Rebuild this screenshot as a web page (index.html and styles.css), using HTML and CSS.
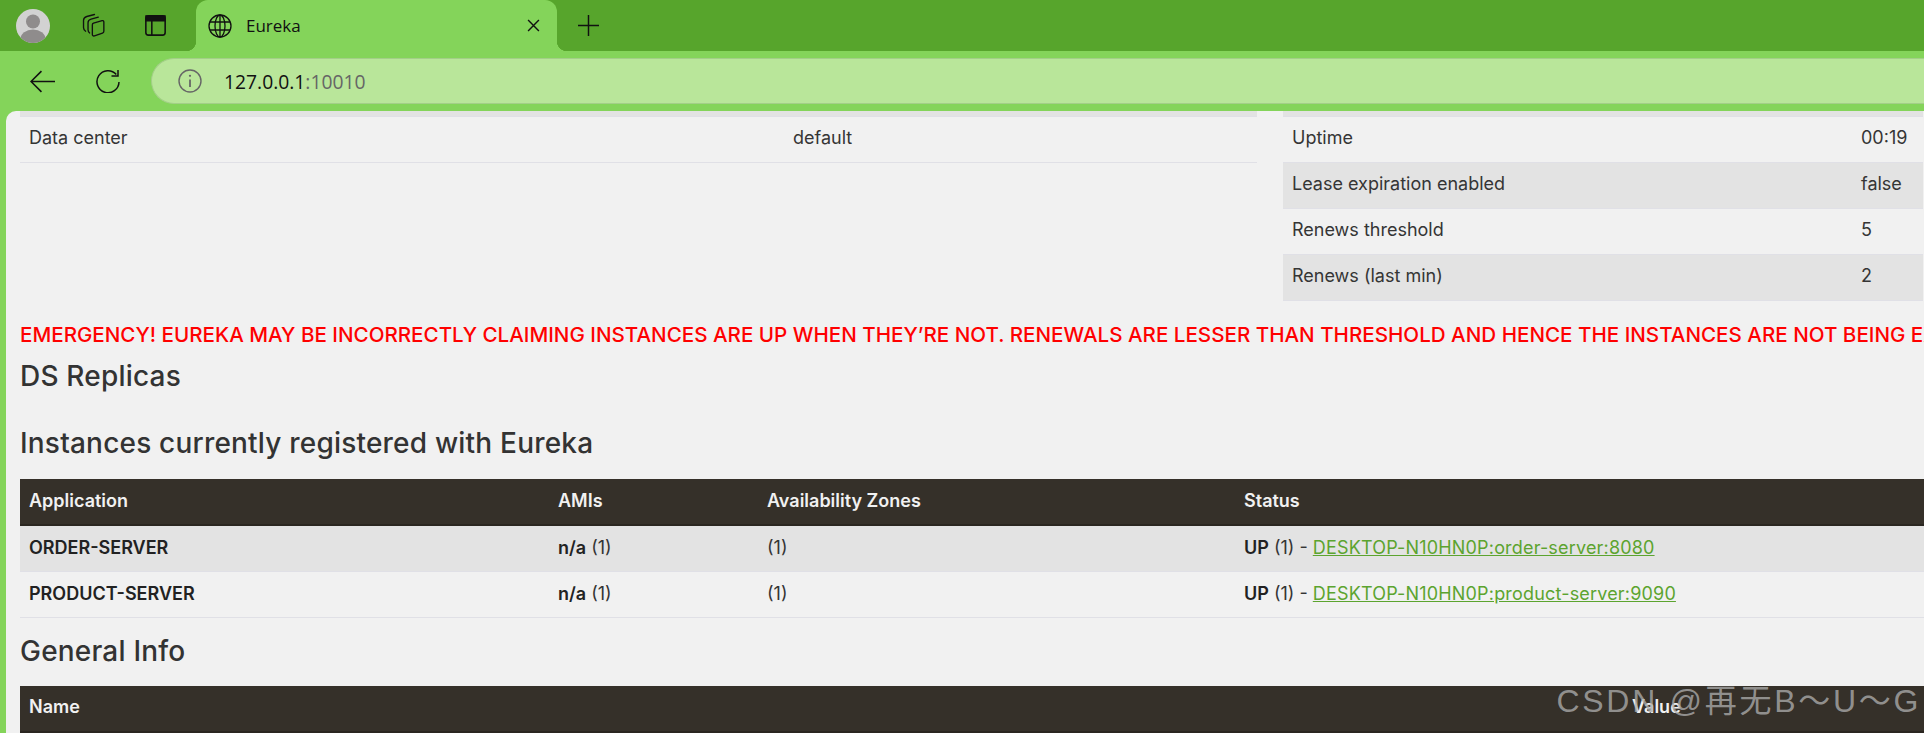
FILE: index.html
```html
<!DOCTYPE html>
<html lang="en">
<head>
<meta charset="utf-8">
<title>Eureka</title>
<link rel="stylesheet" href="styles.css">
</head>
<body>
<div class="tabstrip">
  <svg class="avatar" viewBox="0 0 34 34"><defs><clipPath id="c"><circle cx="17" cy="17" r="17"/></clipPath></defs><circle cx="17" cy="17" r="17" fill="#d2d2d2"/><g clip-path="url(#c)" fill="#8f8c8c"><circle cx="17" cy="12.5" r="7"/><ellipse cx="17" cy="30" rx="12.5" ry="9.5"/></g></svg>
  <svg class="ic-tabs" viewBox="0 0 24 26" fill="none" stroke="#111" stroke-width="1.4" stroke-linejoin="round" stroke-linecap="round"><path d="M13 1.5 5 3.6C3 4.2 1.6 5.5 1.6 7.5V15c0 2 1 3.200 2.200 4"/><path d="M17 4.200 9.500 6.400C7.500 7 6.300 8.200 6.300 10v7.500c0 1.500.6 2.500 1.700 3.300"/><path d="M12 10.500 21 8c1-.3 1.800.3 1.800 1.300V19c0 1-.5 1.600-1.400 1.900L13 23.800c-1.300.4-2.200-.2-2.200-1.500V12.200c0-.9.400-1.400 1.200-1.700Z"/></svg>
  <svg class="ic-vtabs" viewBox="0 0 20 20" fill="none" stroke="#111" stroke-width="1.500"><rect x=".8" y=".8" width="18.400" height="18.400" rx="2.500"/><path d="M1 1h18v4.500H1Z" fill="#111"/><path d="M6.500 5.500V19"/></svg>
  <div class="tab">
    <svg class="ic-globe" viewBox="0 0 24 24" fill="none" stroke="#111" stroke-width="1.300"><circle cx="12" cy="12" r="11"/><ellipse cx="12" cy="12" rx="5" ry="11"/><path d="M12 1v22M2 8h20M2 16h20"/></svg>
    <span class="tab-title">Eureka</span>
    <svg class="ic-close" viewBox="0 0 12 12" fill="none" stroke="#111" stroke-width="1.300"><path d="M1 1l10 10M11 1 1 11"/></svg>
  </div>
  <svg class="ic-plus" viewBox="0 0 20 20" fill="none" stroke="#111" stroke-width="1.400"><path d="M10 0v20M0 10h20"/></svg>
</div>
<div class="toolbar">
  <svg class="ic-back" viewBox="0 0 24 22" fill="none" stroke="#111" stroke-width="1.500"><path d="M24 11H1M11 1 1 11l10 10"/></svg>
  <svg class="ic-reload" viewBox="0 0 24 24" fill="none" stroke="#111" stroke-width="1.500"><path d="M20.300 5.500A11 11 0 1 0 23 13"/><path d="M22 1v6h-6.500"/></svg>
  <div class="addr">
    <svg class="ic-info" viewBox="0 0 24 24" fill="none" stroke="#666" stroke-width="1.400"><circle cx="12" cy="12" r="11"/><path d="M12 10.500V18" stroke-width="1.800"/><circle cx="12" cy="6.800" r="1.100" fill="#666" stroke="none"/></svg>
    <span class="url">127.0.0.1<span class="port">:10010</span></span>
  </div>
</div>
<main class="page">
  <div class="top-tables">
    <table class="tbl left-tbl">
      <colgroup><col class="w-dc"><col></colgroup>
      <tr class="cut"><td colspan="2"></td></tr>
      <tr><td>Data center</td><td>default</td></tr>
    </table>
    <table class="tbl right-tbl">
      <colgroup><col class="w-up"><col></colgroup>
      <tr class="cut"><td colspan="2"></td></tr>
      <tr><td>Uptime</td><td>00:19</td></tr>
      <tr class="alt"><td>Lease expiration enabled</td><td>false</td></tr>
      <tr><td>Renews threshold</td><td>5</td></tr>
      <tr class="alt"><td>Renews (last min)</td><td>2</td></tr>
    </table>
  </div>
  <h4 class="emergency">EMERGENCY! EUREKA MAY BE INCORRECTLY CLAIMING INSTANCES ARE UP WHEN THEY’RE NOT. RENEWALS ARE LESSER THAN THRESHOLD AND HENCE THE INSTANCES ARE NOT BEING EXPIRED JUST TO BE SAFE.</h4>
  <h1 class="head h-ds">DS Replicas</h1>
  <h1 class="head h-inst">Instances currently registered with Eureka</h1>
  <table class="tbl wide inst">
    <colgroup><col class="w-app"><col class="w-ami"><col class="w-az"><col></colgroup>
    <tr class="hdr"><th>Application</th><th>AMIs</th><th>Availability Zones</th><th>Status</th></tr>
    <tr class="alt"><td><b>ORDER-SERVER</b></td><td><b>n/a</b> (1)</td><td>(1)</td><td><b>UP</b> (1) - <a href="#">DESKTOP-N10HN0P:order-server:8080</a></td></tr>
    <tr><td><b>PRODUCT-SERVER</b></td><td><b>n/a</b> (1)</td><td>(1)</td><td><b>UP</b> (1) - <a href="#">DESKTOP-N10HN0P:product-server:9090</a></td></tr>
  </table>
  <h1 class="head h-gen">General Info</h1>
  <table class="tbl wide gen">
    <colgroup><col class="w-name"><col></colgroup>
    <tr class="hdr"><th>Name</th><th>Value</th></tr>
  </table>
</main>
<div class="watermark">CSDN @再无B～U～G</div>
</body>
</html>
```
FILE: styles.css
```css
* { box-sizing: border-box; }
html, body { margin: 0; height: 733px; overflow: hidden; }
body { width: 1924px; background: #84d45a; font-family: Inter, sans-serif; position: relative; }

.tabstrip { height: 51px; background: #57a52c; display: flex; align-items: center; }
.avatar { width: 34px; height: 34px; margin-left: 16px; }
.ic-tabs { width: 23px; height: 25px; margin-left: 32px; }
.ic-vtabs { width: 21px; height: 21px; margin-left: 40px; }
.tab { width: 361px; height: 51px; margin-left: 30px; background: #84d45a; border-radius: 12px 12px 0 0; display: flex; align-items: center; position: relative; padding-left: 12px; }
.tab::before, .tab::after { content: ""; position: absolute; bottom: 0; width: 10px; height: 10px; }
.tab::before { left: -10px; background: radial-gradient(circle at 0 0, transparent 10px, #84d45a 10.500px); }
.tab::after { right: -10px; background: radial-gradient(circle at 100% 0, transparent 10px, #84d45a 10.500px); }
.ic-globe { width: 24px; height: 24px; }
.tab-title { margin-left: 14px; font: 17px "Open Sans", sans-serif; color: #111; flex: 1; }
.ic-close { width: 13px; height: 13px; margin-right: 17px; }
.ic-plus { width: 21px; height: 21px; margin-left: 21px; }

.toolbar { height: 60px; display: flex; align-items: center; }
.ic-back { width: 25px; height: 23px; margin-left: 30px; }
.ic-reload { width: 24px; height: 24px; margin-left: 41px; }
.addr { margin-left: 31px; flex: 1; height: 46px; background: #b9e69a; border: 1.500px solid #a3cf88; border-right: 0; border-radius: 23px 0 0 23px; display: flex; align-items: center; padding-left: 26px; }
.ic-info { width: 24px; height: 24px; }
.url { margin-left: 22px; font: 19.300px "Open Sans", sans-serif; color: #111; }
.port { color: #666; }

.page { height: 622px; margin-left: 6px; padding-left: 14px; background: #f1f1f1; border-top-left-radius: 10px; color: #353535; overflow: hidden; width: 1918px; }
.top-tables { display: flex; gap: 26px; height: 189px; align-items: flex-start; }
.tbl { border-collapse: collapse; font-size: 18px; table-layout: fixed; }
.tbl td, .tbl th { padding: 0 9px 3px; text-align: left; border-bottom: 1px solid #e0e0e6; height: 46px; }
.tbl tr.cut td { height: 5px; background: #e3e3e3; padding: 0; }
.left-tbl { width: 1237px; flex: none; }
.w-dc { width: 764px; }
.right-tbl { width: 640px; flex: none; }
.w-up { width: 569px; }
.alt td { background: #e3e3e3; }
.tbl b { font-weight: 600; color: #222; }

.emergency { margin: 17px 0 0; height: 36px; line-height: 36px; font-size: 20.600px; font-weight: 500; color: #f00; white-space: nowrap; }
.head { margin: 0; font: 500 28px/1.2 Inter, sans-serif; letter-spacing: .2px; color: #333; white-space: nowrap; }
.h-ds { height: 65px; padding-top: 7px; }
.h-inst { height: 61px; padding-top: 9px; }
.wide { width: 1904px; }
.tbl .hdr th { background: #353029; color: #f1f1f1; font-weight: 600; border-bottom: 2px solid #2a2620; height: 46px; }
.inst td { padding-bottom: 2px; }
.w-app { width: 529px; }
.w-ami { width: 209px; }
.w-az { width: 477px; }
.w-name { width: 1603px; }
.h-gen { height: 68px; padding-top: 17px; }
.tbl a { color: #5ca42f; letter-spacing: .18px; }
.watermark { position: absolute; right: 3px; top: 675px; font: 32px "Liberation Sans", "Noto Sans CJK SC", sans-serif; letter-spacing: 2.700px; color: rgba(170,170,170,.8); white-space: nowrap; }
```
